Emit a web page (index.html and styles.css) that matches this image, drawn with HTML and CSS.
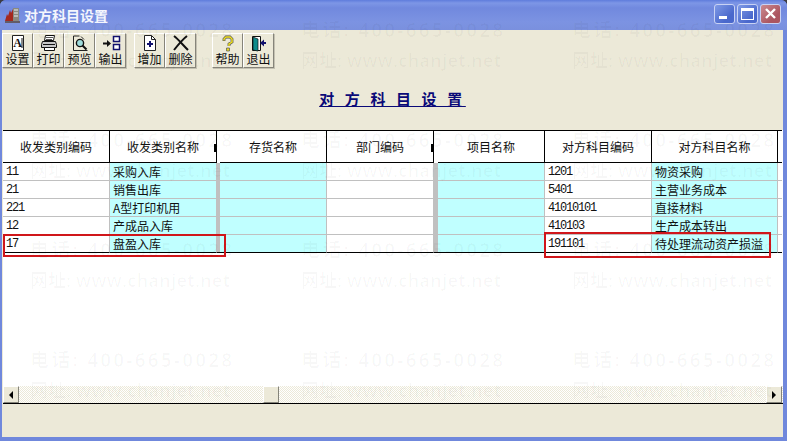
FILE: index.html
```html
<!DOCTYPE html>
<html lang="zh">
<head>
<meta charset="utf-8">
<title>对方科目设置</title>
<link rel="stylesheet" href="styles.css">
</head>
<body>
<div class="window">
  <header class="titlebar">
    <svg class="appicon" width="17" height="17" viewBox="0 0 17 17"><rect x="9" y="2" width="6" height="13" fill="#8a8a80"/><path d="M10 4h4M10 7h4M10 10h4" stroke="#eee" stroke-width="1"/><path d="M1 15 3 8l1 2 2-6 1 3 2-4v12z" fill="#a5281e"/><path d="M1 16h15" stroke="#5a4a40" stroke-width="1.5"/></svg>
    <span class="titletext">对方科目设置</span>
    <div class="winbtns">
      <span class="winbtn"><i class="minglyph"></i></span>
      <span class="winbtn"><i class="maxglyph"></i></span>
      <span class="winbtn closebtn"><svg width="13" height="13" viewBox="0 0 13 13"><path d="M2 2l9 9M11 2l-9 9" stroke="#fff" stroke-width="2.4"/></svg></span>
    </div>
  </header>

  <main class="client">
    <nav class="toolbar">
      <div class="tgroup">
        <button class="tbtn"><svg width="20" height="17" viewBox="0 0 20 17"><path d="M4.500.5h11v15h-11z" fill="#fff" stroke="#222"/><text x="9.500" y="12" text-anchor="middle" class="icontext">A</text><path d="M14 3v10" stroke="#111"/></svg><span>设置</span></button>
        <button class="tbtn"><svg width="20" height="17" viewBox="0 0 20 17"><path d="M6.500.5h9l-1 5h-9z" fill="#fff" stroke="#111"/><path d="M7 2.500h7M7 4.500h6" stroke="#555"/><path d="M3.500 6.500h13l1 3v3h-15v-3z" fill="#c8c8c8" stroke="#111"/><path d="M4 9.500h12" stroke="#111"/><path d="M5.500 12.500h10v3h-10z" fill="#fff" stroke="#111"/></svg><span>打印</span></button>
        <button class="tbtn"><svg width="20" height="17" viewBox="0 0 20 17"><path d="M3.500 1v14.500h14" fill="none" stroke="#222"/><path d="M3.500 1h6" stroke="#222"/><circle cx="10" cy="8" r="3.600" fill="#9fdcdc" stroke="#111" stroke-width="1.400"/><path d="M12.500 10.500l4 4" stroke="#111" stroke-width="2"/><path d="M11 1.500l3 3" stroke="#222"/></svg><span>预览</span></button>
        <button class="tbtn"><svg width="20" height="17" viewBox="0 0 20 17"><path d="M2 8.500h5" stroke="#111" stroke-width="2"/><path d="M6 5l4 3.500L6 12z" fill="#111"/><path d="M12.500 1.500h6v5h-6zM12.500 9.500h6v5h-6z" fill="#fff" stroke="#11116e" stroke-width="1.500"/></svg><span>输出</span></button>
      </div>
      <div class="tgroup">
        <button class="tbtn"><svg width="20" height="17" viewBox="0 0 20 17"><path d="M4.500.5h7l4 4v11h-11z" fill="#fff" stroke="#222"/><path d="M11.500.5v4h4" fill="none" stroke="#222"/><path d="M10 6v6M7 9h6" stroke="#11116e" stroke-width="2"/></svg><span>增加</span></button>
        <button class="tbtn"><svg width="20" height="17" viewBox="0 0 20 17"><path d="M3 1c4 3 9 9 14 14" fill="none" stroke="#111" stroke-width="2"/><path d="M16 1C12 4 7 10 3 15" fill="none" stroke="#111" stroke-width="2"/></svg><span>删除</span></button>
      </div>
      <div class="tgroup">
        <button class="tbtn"><svg width="20" height="17" viewBox="0 0 20 17"><path d="M6 6V4l2-2h4l2 2v3l-3 2v2" fill="none" stroke="#555" stroke-width="2.800"/><path d="M6 5.500V4l2-2h4l2 2v3l-3 2v2" fill="none" stroke="#f0e020" stroke-width="1.500"/><path d="M8.500 13h3v3h-3z" fill="#e8d820" stroke="#555" stroke-width=".7"/></svg><span>帮助</span></button>
        <button class="tbtn"><svg width="20" height="17" viewBox="0 0 20 17"><path d="M3.500 1.500h8v14h-8z" fill="#fff" stroke="#111"/><path d="M4 2l5 2v12l-5-1z" fill="#0f8c8c" stroke="#111" stroke-width=".7"/><path d="M17 8h-3" stroke="#11116e" stroke-width="2"/><path d="M15 4.500v7L11 8z" fill="#11116e"/></svg><span>退出</span></button>
      </div>
    </nav>

    <h1 class="heading"><u>对 方 科 目 设 置</u></h1>

    <section class="gridbox">
      <div class="tablearea">
        <table class="grid">
          <colgroup>
            <col class="cw"><col class="cw"><col class="cn3"><col class="cw"><col class="cw"><col class="cn4"><col class="cw"><col class="cw"><col class="cwide"><col class="cn4">
          </colgroup>
          <thead>
            <tr>
              <th>收发类别编码</th><th class="ticked">收发类别名称</th><th class="gap"></th><th>存货名称</th><th class="ticked">部门编码</th><th class="gap"></th><th>项目名称</th><th>对方科目编码</th><th>对方科目名称</th><th class="end"></th>
            </tr>
          </thead>
          <tbody>
            <tr><td class="num">11</td><td class="cy">采购入库</td><td class="gr"></td><td class="cy"></td><td></td><td class="gr"></td><td class="cy"></td><td class="num">1201</td><td class="cy">物资采购</td><td class="end"></td></tr>
            <tr><td class="num">21</td><td class="cy">销售出库</td><td class="gr"></td><td class="cy"></td><td></td><td class="gr"></td><td class="cy"></td><td class="num">5401</td><td class="cy">主营业务成本</td><td class="end"></td></tr>
            <tr><td class="num">221</td><td class="cy">A型打印机用</td><td class="gr"></td><td class="cy"></td><td></td><td class="gr"></td><td class="cy"></td><td class="num">41010101</td><td class="cy">直接材料</td><td class="end"></td></tr>
            <tr><td class="num">12</td><td class="cy">产成品入库</td><td class="gr"></td><td class="cy"></td><td></td><td class="gr"></td><td class="cy"></td><td class="num">410103</td><td class="cy">生产成本转出</td><td class="end"></td></tr>
            <tr class="last"><td class="num">17</td><td class="cy">盘盈入库</td><td class="gr"></td><td class="cy"></td><td></td><td class="gr"></td><td class="cy"></td><td class="num">191101</td><td class="cy">待处理流动资产损溢</td><td class="end"></td></tr>
          </tbody>
        </table>
      </div>
      <div class="hscroll">
        <span class="sbtn"><i class="arrow-left"></i></span>
        <span class="thumb"></span>
        <span class="sbtn"><i class="arrow-right"></i></span>
      </div>
    </section>
    <div class="statusarea"></div>
  </main>

  <div class="mark mark-a"></div>
  <div class="mark mark-b"></div>

  <div class="watermark">
    <div class="wm"><p>电话: 400-665-0028</p><p class="url">网址: www.chanjet.net</p></div>
    <div class="wm"><p>电话: 400-665-0028</p><p class="url">网址: www.chanjet.net</p></div>
    <div class="wm"><p>电话: 400-665-0028</p><p class="url">网址: www.chanjet.net</p></div>
    <div class="wm"><p>电话: 400-665-0028</p><p class="url">网址: www.chanjet.net</p></div>
    <div class="wm"><p>电话: 400-665-0028</p><p class="url">网址: www.chanjet.net</p></div>
    <div class="wm"><p>电话: 400-665-0028</p><p class="url">网址: www.chanjet.net</p></div>
    <div class="wm"><p>电话: 400-665-0028</p><p class="url">网址: www.chanjet.net</p></div>
    <div class="wm"><p>电话: 400-665-0028</p><p class="url">网址: www.chanjet.net</p></div>
    <div class="wm"><p>电话: 400-665-0028</p><p class="url">网址: www.chanjet.net</p></div>
    <div class="wm"><p>电话: 400-665-0028</p><p class="url">网址: www.chanjet.net</p></div>
    <div class="wm"><p>电话: 400-665-0028</p><p class="url">网址: www.chanjet.net</p></div>
    <div class="wm"><p>电话: 400-665-0028</p><p class="url">网址: www.chanjet.net</p></div>
  </div>
</div>
</body>
</html>
```

FILE: styles.css
```css
* { box-sizing: border-box; }
html, body { margin: 0; padding: 0; background: #3c3c44; }
body { width: 787px; height: 441px; overflow: hidden; font-family: "Noto Sans CJK SC", "Liberation Sans", sans-serif; font-size: 12px; color: #111; }

.window {
  position: relative;
  width: 787px;
  height: 441px;
  display: flex;
  flex-direction: column;
  background: #7088dc;
  border-radius: 6px 6px 0 0;
  overflow: hidden;
}

.titlebar {
  height: 30px;
  flex: none;
  display: flex;
  align-items: center;
  padding: 0 6px 0 4px;
  background: linear-gradient(#5f7cdc 0, #7d96e6 3px, #7189de 8px, #7c93e2 22px, #7a90de 100%);
}
.appicon { flex: none; margin-top: -1px; }
.titletext { margin-left: 3px; color: #fff; font-size: 14px; font-weight: 700; line-height: 1; opacity: .92; }
.winbtns { margin-left: auto; display: flex; gap: 2px; margin-top: -3px; }
.winbtn {
  width: 21px;
  height: 20px;
  display: flex;
  align-items: center;
  justify-content: center;
  border: 1px solid #c8d2f4;
  border-radius: 3px;
  background: linear-gradient(135deg, #7f9ae6, #4a68cc 70%);
}
.closebtn { background: linear-gradient(135deg, #cb8a90, #ab5560 70%); }
.minglyph { width: 8px; height: 3px; background: #fff; margin: 8px 4px 0 0; }
.maxglyph { width: 13px; height: 12px; border: 1px solid #fff; border-top-width: 3px; }

.client {
  flex: 1;
  min-height: 0;
  margin: 0 4px 4px 2px;
  background: #ece9d8;
  display: flex;
  flex-direction: column;
}

.toolbar { flex: none; display: flex; gap: 8px; padding-top: 3px; height: 38px; }
.tgroup { display: flex; }
.tgroup:last-child { margin-left: 8px; }
.tbtn {
  width: 31px;
  height: 35px;
  padding: 1px 0 0;
  display: flex;
  flex-direction: column;
  align-items: center;
  background: #ece9d8;
  border: 1px solid;
  border-color: #fff #86847a #86847a #fff;
  box-shadow: 1px 1px 0 #c4c1b2;
  font: 12px/14px "Noto Sans CJK SC", sans-serif;
  color: #111;
}
.tbtn svg { display: block; flex: none; }
.tbtn span { white-space: nowrap; }
.icontext { font: 700 12px "Liberation Serif", serif; fill: #111; }

.heading {
  flex: none;
  height: 62px;
  margin: 0;
  padding-top: 21px;
  text-align: center;
  font: 700 15px/20px "Noto Sans CJK SC", sans-serif;
  color: #0a0a78;
  letter-spacing: 3.6px;
}
.heading u { text-underline-offset: 1px; text-decoration-thickness: 1px; }

.gridbox {
  flex: none;
  height: 274px;
  margin-left: 1px;
  background: #fff;
  border-bottom: 1px solid #000;
  display: flex;
  flex-direction: column;
}
.tablearea { flex: 1; min-height: 0; overflow: hidden; }

.grid { table-layout: fixed; width: 779px; border-collapse: separate; border-spacing: 0; }
.cw { width: 107px; }
.cn3 { width: 3px; }
.cn4 { width: 4px; }
.cwide { width: 126px; }
.grid th {
  position: relative;
  height: 33px;
  padding: 0;
  background: #fff;
  font-weight: 400;
  font-size: 12px;
  border-top: 1px solid #000;
  border-bottom: 1px solid #000;
  border-right: 1px solid #000;
  white-space: nowrap;
}
.grid th.gap { border-right: 0; border-bottom: 0; }
.grid th.end { border-right: 0; }
.grid th.ticked::after {
  content: "";
  position: absolute;
  right: 0;
  top: 13px;
  width: 2px;
  height: 8px;
  background: #000;
}
.grid td {
  height: 18px;
  padding: 0 0 0 3px;
  font-size: 12px;
  line-height: 16px;
  border-right: 1px solid #c0c0c0;
  border-bottom: 1px solid #c0c0c0;
  white-space: nowrap;
  overflow: hidden;
  background: #fff;
}
.grid td.num { font-family: "Liberation Mono", monospace; font-size: 12px; letter-spacing: -1.2px; padding-top: 1px; }
.grid td.cy { background: #c0ffff; }
.grid td.gr { background: #c0c0c0; padding: 0; border-right: 0; }
.grid td.end { padding: 0; border-right: 0; }
.grid tr.last td { border-bottom-color: #000; }

.hscroll {
  flex: none;
  height: 17px;
  display: flex;
  background: repeating-conic-gradient(#ece9d8 0 25%, #fff 0 50%) 0 0 / 2px 2px;
}
.sbtn, .thumb {
  height: 17px;
  display: flex;
  align-items: center;
  justify-content: center;
  background: #ece9d8;
  border: 1px solid;
  border-color: #fff #85847a #85847a #fff;
}
.sbtn { width: 16px; }
.thumb { width: 16px; margin-left: 244px; margin-right: 487px; }
.arrow-left, .arrow-right { width: 0; height: 0; border-top: 4px solid transparent; border-bottom: 4px solid transparent; }
.arrow-left { border-right: 4px solid #000; }
.arrow-right { border-left: 4px solid #000; }

.statusarea { flex: 1; }

.mark { position: absolute; border: 2px solid #d0161a; pointer-events: none; }
.mark-a { left: 3px; top: 234px; width: 223px; height: 23px; }
.mark-b { left: 544px; top: 232px; width: 227px; height: 26px; }

.watermark {
  position: absolute;
  inset: 0;
  padding: 15px 0 0 30px;
  display: grid;
  grid-template-columns: repeat(3, 271px);
  grid-auto-rows: 110px;
  pointer-events: none;
  overflow: hidden;
  color: rgba(0, 0, 0, .028);
}
.wm p {
  margin: 0;
  height: 30px;
  font: 700 19px/30px "Open Sans", "Noto Sans CJK SC", sans-serif;
  letter-spacing: 2.2px;
  white-space: nowrap;
}
.wm p.url { font-size: 18px; letter-spacing: 0; }
```
